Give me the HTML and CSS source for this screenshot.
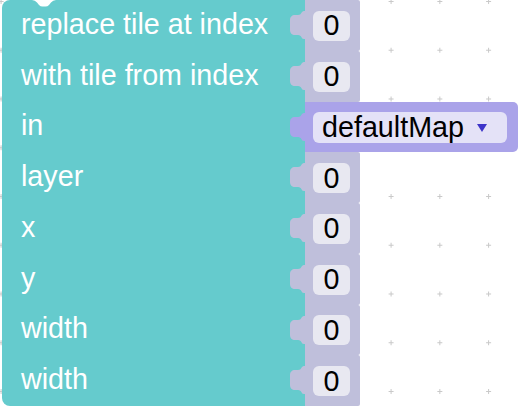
FILE: index.html
```html
<!DOCTYPE html>
<html lang="en">
<head>
    <meta charset="UTF-8">
    <title>Tile block</title>
    <link rel="stylesheet" href="styles.css">
</head>
<body>
    <!-- workspace grid -->
    <svg class="grid" width="519" height="415">
        <defs>
            <pattern id="dots" width="48.75" height="48.75" patternUnits="userSpaceOnUse" x="-1.4" y="-1">
                <rect x="0" y="2" width="5" height="1" fill="#c8c8c8"/>
                <rect x="2" y="0" width="1" height="5" fill="#c8c8c8"/>
            </pattern>
        </defs>
        <rect width="519" height="415" fill="url(#dots)"/>
    </svg>

    <div class="block">
        <svg class="notch" width="24" height="7" viewBox="0 0 24 7">
            <path d="M0 0 Q3 0 5 2.5 L7 5 Q8.5 6.5 10.5 6.5 H13.5 Q15.5 6.5 17 5 L19 2.5 Q21 0 24 0 Z" fill="#fff"/>
        </svg>

        <div class="row">
            <div class="label first">replace tile at index</div>
            <div class="input shadow">
                <svg class="tab" width="17" height="28" viewBox="0 0 17 28"><path d="M17 0 H15 C12 0 13 4 9 4 H6 C3 4 1 6 1 9 V19 C1 22 3 24 6 24 H9 C13 24 12 28 15 28 H17 Z"/></svg>
                <span class="field">0</span>
            </div>
        </div>
        <div class="row">
            <div class="label">with tile from index</div>
            <div class="input shadow">
                <svg class="tab" width="17" height="28" viewBox="0 0 17 28"><path d="M17 0 H15 C12 0 13 4 9 4 H6 C3 4 1 6 1 9 V19 C1 22 3 24 6 24 H9 C13 24 12 28 15 28 H17 Z"/></svg>
                <span class="field">0</span>
            </div>
        </div>
        <div class="row">
            <div class="label">in</div>
            <div class="input variable">
                <svg class="tab" width="17" height="28" viewBox="0 0 17 28"><path d="M17 0 H15 C12 0 13 4 9 4 H6 C3 4 1 6 1 9 V19 C1 22 3 24 6 24 H9 C13 24 12 28 15 28 H17 Z"/></svg>
                <span class="field dropdown">defaultMap <span class="arrow"></span></span>
            </div>
        </div>
        <div class="row">
            <div class="label">layer</div>
            <div class="input shadow">
                <svg class="tab" width="17" height="28" viewBox="0 0 17 28"><path d="M17 0 H15 C12 0 13 4 9 4 H6 C3 4 1 6 1 9 V19 C1 22 3 24 6 24 H9 C13 24 12 28 15 28 H17 Z"/></svg>
                <span class="field">0</span>
            </div>
        </div>
        <div class="row">
            <div class="label">x</div>
            <div class="input shadow">
                <svg class="tab" width="17" height="28" viewBox="0 0 17 28"><path d="M17 0 H15 C12 0 13 4 9 4 H6 C3 4 1 6 1 9 V19 C1 22 3 24 6 24 H9 C13 24 12 28 15 28 H17 Z"/></svg>
                <span class="field">0</span>
            </div>
        </div>
        <div class="row">
            <div class="label">y</div>
            <div class="input shadow">
                <svg class="tab" width="17" height="28" viewBox="0 0 17 28"><path d="M17 0 H15 C12 0 13 4 9 4 H6 C3 4 1 6 1 9 V19 C1 22 3 24 6 24 H9 C13 24 12 28 15 28 H17 Z"/></svg>
                <span class="field">0</span>
            </div>
        </div>
        <div class="row">
            <div class="label">width</div>
            <div class="input shadow">
                <svg class="tab" width="17" height="28" viewBox="0 0 17 28"><path d="M17 0 H15 C12 0 13 4 9 4 H6 C3 4 1 6 1 9 V19 C1 22 3 24 6 24 H9 C13 24 12 28 15 28 H17 Z"/></svg>
                <span class="field">0</span>
            </div>
        </div>
        <div class="row">
            <div class="label last">width</div>
            <div class="input shadow">
                <svg class="tab" width="17" height="28" viewBox="0 0 17 28"><path d="M17 0 H15 C12 0 13 4 9 4 H6 C3 4 1 6 1 9 V19 C1 22 3 24 6 24 H9 C13 24 12 28 15 28 H17 Z"/></svg>
                <span class="field">0</span>
            </div>
        </div>

        <svg class="next" width="28" height="9" viewBox="0 0 24 7" preserveAspectRatio="none">
            <path d="M0 0 Q3 0 5 2.5 L7 5 Q8.5 6.5 10.5 6.5 H13.5 Q15.5 6.5 17 5 L19 2.5 Q21 0 24 0 Z" fill="#65cbcd"/>
        </svg>
    </div>
</body>
</html>
```

FILE: styles.css
```css
/* Workspace */
body {
    margin: 0;
    padding: 0;
    background-color: #fff;
    font-family: "Liberation Sans", Arial, sans-serif;
    overflow: hidden;
}

.grid {
    position: absolute;
    left: 0;
    top: 0;
}

/* Main block */
.block {
    position: relative;
    display: flex;
    flex-direction: column;
    margin-left: 2px;
    width: 517px;
}

.notch {
    position: absolute;
    left: 30px;
    top: 0;
    z-index: 2;
}

.next {
    position: absolute;
    left: 30px;
    bottom: -8px;
}

.row {
    display: flex;
    height: 50.75px;
}

.label {
    width: 303px;
    padding-left: 19px;
    padding-bottom: 2px;
    box-sizing: border-box;
    display: flex;
    align-items: center;
    background-color: #65cbcd;
    color: #fff;
    font-size: 28.7px;
    white-space: nowrap;
}

.label.first {
    border-top-left-radius: 8px;
}

.label.last {
    border-bottom-left-radius: 8px;
}

/* Inputs */
.input {
    position: relative;
    display: flex;
    align-items: center;
    padding-left: 8px;
    box-sizing: border-box;
    border-radius: 0 2px 2px 0;
}

.input .tab {
    position: absolute;
    left: -16px;
    top: 11px;
}

.shadow {
    width: 55px;
    background-color: #bfbfdb;
}

.shadow .tab path {
    fill: #bfbfdb;
}

.variable {
    width: 213px;
    background-color: #aaa3e9;
    border-radius: 0 5px 5px 0;
}

.variable .tab path {
    fill: #aaa3e9;
}

.field {
    height: 30px;
    width: 37px;
    display: flex;
    align-items: center;
    justify-content: center;
    background-color: #e8e8f1;
    border-radius: 6px;
    color: #000;
    font-size: 28.7px;
    margin-top: 1px;
}

.field.dropdown {
    width: 194px;
    height: 31px;
    justify-content: flex-start;
    padding-left: 9px;
    box-sizing: border-box;
    background-color: #e4e2f7;
}

.arrow {
    width: 0;
    height: 0;
    border-left: 5px solid transparent;
    border-right: 5px solid transparent;
    border-top: 8px solid #3d34c9;
    margin-left: 13px;
    margin-top: 1px;
}
```
